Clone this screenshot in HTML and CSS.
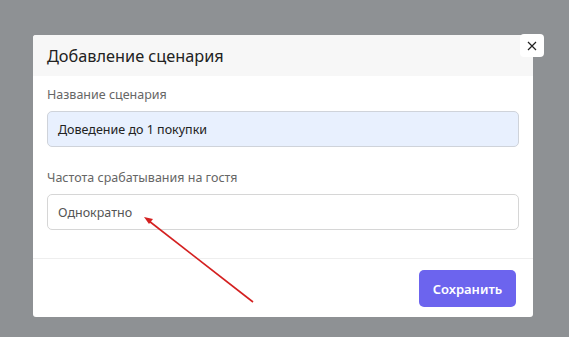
FILE: index.html
```html
<!doctype html>
<html lang="ru">
  <head>
    <meta charset="UTF-8">
    <meta name="viewport" content="width=device-width, initial-scale=1.0">
    <title>Добавление сценария</title>
    <link rel="stylesheet" href="styles.css">
  </head>
  <body>
    <div class="overlay">
      <div class="modal">
        <button class="modal-close" aria-label="Закрыть">
          <svg width="10" height="10" viewBox="0 0 10 10">
            <path d="M1 1 L9 9 M9 1 L1 9" stroke="#222" stroke-width="1.2" fill="none"/>
          </svg>
        </button>

        <div class="modal-header">
          <h2 class="modal-title">Добавление сценария</h2>
        </div>

        <div class="modal-body">
          <label class="field-label">Название сценария</label>
          <div class="field-input filled">Доведение до 1 покупки</div>

          <label class="field-label second">Частота срабатывания на гостя</label>
          <div class="field-input">Однократно</div>
        </div>

        <div class="modal-footer">
          <button class="btn-save">Сохранить</button>
        </div>
      </div>

      <!-- annotation arrow -->
      <svg class="arrow" width="569" height="337" viewBox="0 0 569 337">
        <line x1="253" y1="302" x2="149" y2="221" stroke="#d42020" stroke-width="1.6"/>
        <path d="M144 217 L153 219 L149 224 Z" fill="#d42020"/>
      </svg>
    </div>
  </body>
</html>
```

FILE: styles.css
```css
html, body {
  margin: 0;
  height: 100%;
}

body {
  background: #8e9194;
  font-family: "Noto Sans", "Open Sans", sans-serif;
  overflow: hidden;
}

.overlay {
  position: relative;
  height: 337px;
  padding: 35px 0 0 33px;
  box-sizing: border-box;
}

.modal {
  position: relative;
  width: 500px;
  background: #fff;
  border-radius: 3px;
}

.modal-close {
  position: absolute;
  top: -1px;
  right: -11px;
  width: 24px;
  height: 23px;
  border: 0;
  border-radius: 4px;
  background: #fff;
  padding: 0;
  display: flex;
  align-items: center;
  justify-content: center;
}

.modal-header {
  height: 41px;
  background: #f7f7f7;
  padding: 0 14px;
  display: flex;
  align-items: center;
  border-radius: 3px 3px 0 0;
}

.modal-title {
  margin: 0;
  font-size: 16.3px;
  font-weight: 400;
  color: #222;
}

.modal-body {
  padding: 10px 14px 28px;
  display: flex;
  flex-direction: column;
}

.field-label {
  font-size: 12.5px;
  line-height: 17px;
  color: #666;
  margin-bottom: 8px;
}

.field-label.second {
  margin-top: 22px;
}

.field-input {
  height: 34px;
  border: 1px solid #d6d6d6;
  border-radius: 5px;
  padding: 0 10px;
  display: flex;
  align-items: center;
  font-size: 12.5px;
  color: #555;
}

.field-input.filled {
  background: #e8f0fe;
  border-color: #cfd3da;
  color: #222;
}

.modal-footer {
  border-top: 1px solid #eee;
  height: 59px;
  padding: 11px 17px 0 0;
  box-sizing: border-box;
  display: flex;
  justify-content: flex-end;
  align-items: flex-start;
}

.btn-save {
  height: 37px;
  width: 97px;
  border: 0;
  border-radius: 5px;
  background: #6c64ee;
  color: #fff;
  font-family: inherit;
  font-size: 13px;
  font-weight: 600;
}

.arrow {
  position: absolute;
  top: 0;
  left: 0;
  pointer-events: none;
}
```
